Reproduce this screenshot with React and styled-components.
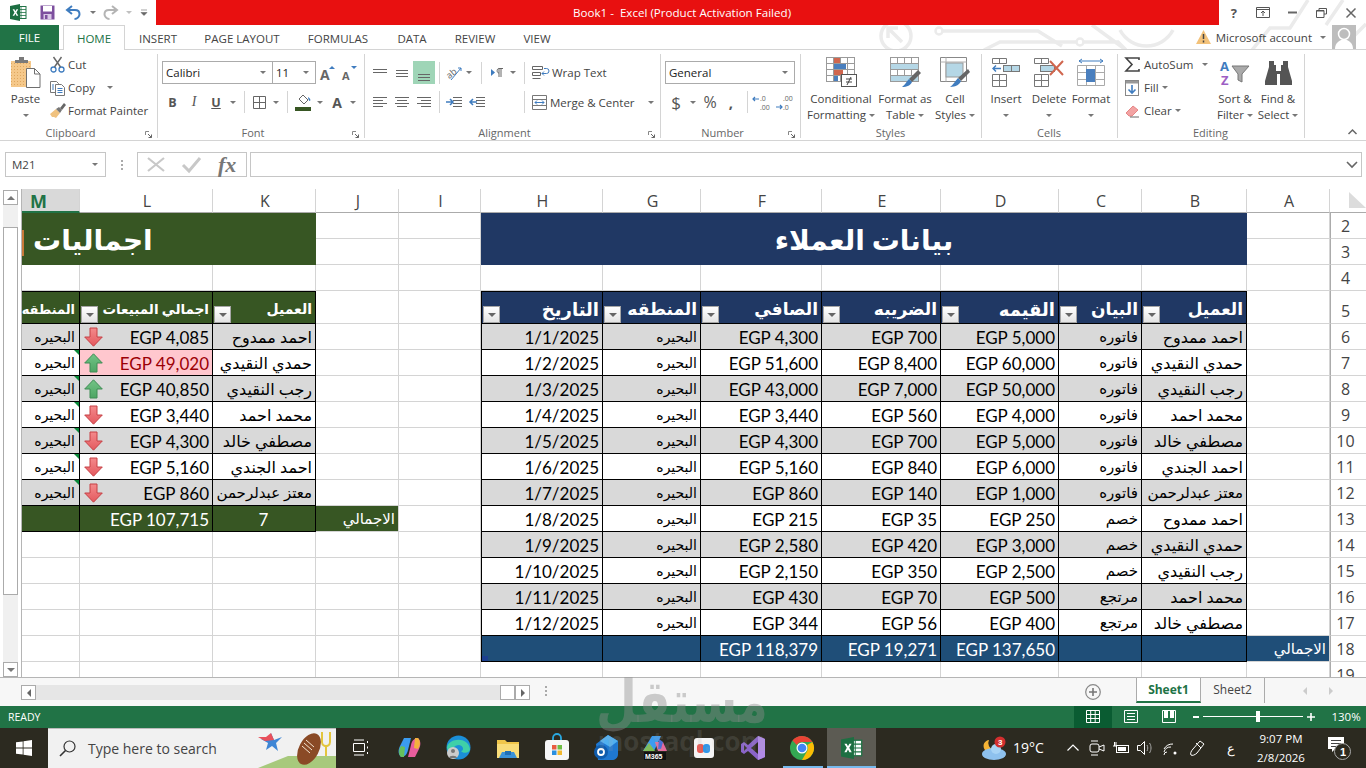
import React from "react";
import styled, { createGlobalStyle } from "styled-components";

const UI = `"Open Sans", "Noto Sans", sans-serif`;
const CELL = `Lato, "DejaVu Sans", sans-serif`;

const GlobalStyle = createGlobalStyle`
  html, body { margin: 0; padding: 0; background: #fff; }
  body { font-family: ${UI}; overflow: hidden; }
  * { box-sizing: border-box; }
  svg { display: block; overflow: visible; }
`;

const Page = styled.div`
  position: relative;
  width: 1366px;
  height: 768px;
  overflow: hidden;
  display: flex;
  flex-direction: column;
  background: #fff;
`;

/* ---------- title bar ---------- */
const Circuit = styled.svg`
  position: absolute;
  left: 860px;
  top: 0;
  overflow: hidden;
`;

const TitleBar = styled.div`
  position: relative;
  height: 25px;
  display: flex;
  align-items: center;
`;

const Quick = styled.div`
  width: 156px;
  height: 25px;
  display: flex;
  align-items: center;
`;

const QuickBtn = styled.div`
  width: ${(p) => p.$w}px;
  display: flex;
  justify-content: center;
  align-items: center;
`;

const TitleText = styled.div`
  width: 1064px;
  height: 24.5px;
  padding-right: 11px;
  background: #e81010;
  color: #fff;
  font-size: 11.6px;
  line-height: 25px;
  text-align: center;
  white-space: pre;
`;

const WinBtn = styled.div`
  width: 29.4px;
  display: flex;
  justify-content: center;
`;

/* ---------- tabs ---------- */
const TabRow = styled.div`
  position: relative;
  height: 25px;
  display: flex;
  border-bottom: 1px solid #d4d4d4;
`;

const FileTab = styled.div`
  width: 59px;
  height: 25px;
  background: #217346;
  color: #fff;
  font-size: 11.5px;
  line-height: 25px;
  text-align: center;
  margin-right: 4px;
`;

const Tab = styled.div`
  width: ${(p) => p.$w}px;
  height: 25px;
  font-size: 11.5px;
  line-height: 25px;
  text-align: center;
  color: ${(p) => (p.$on ? "#217346" : "#444")};
  background: ${(p) => (p.$on ? "#fff" : "transparent")};
  border: 1px solid ${(p) => (p.$on ? "#d4d4d4" : "transparent")};
  border-bottom: 0;
`;

const Account = styled.div`
  margin-left: auto;
  display: flex;
  align-items: center;
  height: 24px;
  font-size: 11.5px;
  color: #444;
  padding-right: 10px;
`;

const AccountName = styled.span`
  margin: 0 8px 0 5px;
`;

const Avatar = styled.div`
  width: 24px;
  height: 24px;
  margin-left: 6px;
  background: #bdbdbd;
  overflow: hidden;
`;

/* ---------- ribbon ---------- */
const Ribbon = styled.div`
  position: relative;
  height: 92px;
  padding-top: 4px;
  display: flex;
  border-bottom: 1px solid #d4d4d4;
`;

const Group = styled.div`
  position: relative;
  width: ${(p) => p.$w}px;
  height: 84px;
  display: flex;
  flex-direction: column;
  border-right: 1px solid #d4d4d4;
`;

const GroupBody = styled.div`
  flex: 1;
  display: flex;
  padding-left: ${(p) => p.$pad || 0}px;
`;

const GroupLabel = styled.div`
  height: 10px;
  line-height: 10px;
  font-size: 11px;
  text-align: center;
  color: #666;
  padding-right: ${(p) => (p.$launcher ? 16 : 1)}px;
`;

const Launcher = styled.svg`
  position: absolute;
  right: 5px;
  bottom: 0;
`;

const BigBtn = styled.div`
  width: ${(p) => p.$w}px;
  margin-left: ${(p) => p.$ml || 0}px;
  display: flex;
  flex-direction: column;
  align-items: center;
  font-size: 11.5px;
  line-height: 16px;
  color: #444;
  white-space: nowrap;
`;

const BigIcon = styled.div`
  height: 37px;
  display: flex;
  align-items: center;
  justify-content: center;
`;

const BigLine = styled.div`
  height: 16px;
  display: flex;
  align-items: center;
  gap: 3px;
`;

const SmallCol = styled.div`
  margin-left: ${(p) => p.$ml || 0}px;
  margin-top: -1px;
  width: ${(p) => p.$w}px;
  display: flex;
  flex-direction: column;
`;

const SmallRow = styled.div`
  height: 23px;
  display: flex;
  align-items: center;
  font-size: 11.5px;
  color: #444;
  white-space: nowrap;
`;

const SmallIcon = styled.div`
  width: ${(p) => p.$w || 18}px;
  flex: none;
  display: flex;
`;

const CaretGap = styled.span`
  width: ${(p) => p.$w}px;
  flex: none;
`;

const Stack = styled.div`
  flex: 1;
  padding-top: 7px;
  padding-left: ${(p) => p.$pad}px;
  display: flex;
  flex-direction: column;
  gap: 7px;
`;

const ToolRow = styled.div`
  height: ${(p) => p.$h || 22}px;
  display: flex;
  align-items: center;
`;

const Tool = styled.div`
  width: ${(p) => p.$w}px;
  height: 23px;
  margin-left: ${(p) => p.$ml || 0}px;
  flex: none;
  display: flex;
  align-items: center;
  justify-content: center;
  background: ${(p) => (p.$on ? "#9fd5b7" : "transparent")};
  color: #555;
  font-size: ${(p) => p.$size || 14}px;
  font-weight: ${(p) => (p.$bold ? 700 : 400)};
  font-style: ${(p) => (p.$italic ? "italic" : "normal")};
  font-family: ${(p) => (p.$serif ? `"Liberation Serif", serif` : UI)};
  text-decoration: ${(p) => (p.$under ? "underline" : "none")};
`;

const Sep = styled.div`
  width: 1px;
  height: 22px;
  flex: none;
  margin-left: ${(p) => p.$ml || 0}px;
  background: #d4d4d4;
`;

const Combo = styled.div`
  width: ${(p) => p.$w}px;
  height: 23px;
  margin-left: ${(p) => p.$ml || 0}px;
  flex: none;
  display: flex;
  align-items: center;
  justify-content: space-between;
  padding: 0 6px 0 3px;
  border: 1px solid #ababab;
  background: #fff;
  font-size: 11.5px;
  color: #222;
`;

const Caret = styled.span`
  display: block;
  flex: none;
  width: 0;
  height: 0;
  border-left: ${(p) => p.$s || 3}px solid transparent;
  border-right: ${(p) => p.$s || 3}px solid transparent;
  border-top: ${(p) => p.$s || 3}px solid ${(p) => p.$c || "#777"};
`;

const TextTool = styled.div`
  margin-left: ${(p) => p.$ml}px;
  display: flex;
  align-items: center;
  gap: 3px;
  font-size: 11.5px;
  color: #444;
  white-space: nowrap;
`;

const Collapse = styled.svg`
  position: absolute;
  right: 9px;
  bottom: 5px;
`;

/* ---------- formula bar ---------- */
const FormulaBar = styled.div`
  height: 48px;
  padding: 11px 4px 0 5px;
  display: flex;
  align-items: flex-start;
`;

const NameBox = styled.div`
  width: 101px;
  height: 25px;
  display: flex;
  align-items: center;
  justify-content: space-between;
  padding: 0 7px 0 6px;
  border: 1px solid #c6c6c6;
  font-size: 11.5px;
  color: #444;
`;

const Dots = styled.div`
  width: 31px;
  height: 25px;
  display: flex;
  align-items: center;
  justify-content: center;
`;

const FxBox = styled.div`
  width: 110px;
  height: 25px;
  display: flex;
  align-items: center;
  gap: 17px;
  padding-left: 9px;
  border: 1px solid #c6c6c6;
`;

const FxMark = styled.span`
  font-family: "Liberation Serif", serif;
  font-style: italic;
  font-weight: 700;
  font-size: 22px;
  color: #777;
`;

const FormulaInput = styled.div`
  flex: 1;
  height: 25px;
  margin-left: 3px;
  display: flex;
  align-items: center;
  justify-content: flex-end;
  padding-right: 3px;
  border: 1px solid #c6c6c6;
`;

/* ---------- sheet ---------- */
const SheetArea = styled.div`
  height: 489px;
  display: flex;
  border-bottom: 1px solid #b5b5b5;
`;

const VScroll = styled.div`
  width: 22px;
  padding: 1px 3px 0;
  display: flex;
  flex-direction: column;
  border-right: 1px solid #b5b5b5;
`;

const ScrollBtn = styled.div`
  height: 15px;
  flex: none;
  display: flex;
  align-items: center;
  justify-content: center;
  background: #fff;
  border: 1px solid #ababab;
`;

const VTrack = styled.div`
  flex: 1;
  margin: 0;
  padding: 22px 0 67px;
  display: flex;
  background: #f0f0f0;
`;

const VThumb = styled.div`
  flex: 1;
  background: #fff;
  border: 1px solid #ababab;
`;

const Grid = styled.div`
  direction: rtl;
  flex: 1;
  display: grid;
  grid-template-columns: 36px 83px 105px 83px 118px 119px 121px 98px 122px 82px 83px 103px 133px 58px;
  grid-template-rows: 24px 26px 26px 26px 33px repeat(13, 26px) 16px;
  overflow: hidden;
`;

const ColHead = styled.div`
  direction: ltr;
  font-size: ${(p) => (p.$sel ? 18 : 16)}px;
  line-height: 25px;
  text-align: center;
  padding: ${(p) => (p.$sel ? "0 24px 0 0" : "0 0 0 2px")};
  color: ${(p) => (p.$sel ? "#217346" : "#444")};
  font-weight: ${(p) => (p.$sel ? 700 : 400)};
  background: ${(p) => (p.$sel ? "#d9d9d9" : "#fff")};
  border-right: 1px solid #d4d4d4;
  border-bottom: ${(p) => (p.$sel ? "2px solid #217346" : "1px solid #ababab")};
`;

const Corner = styled.div`
  padding: 3px 0 0 3px;
  border-bottom: 1px solid #ababab;
`;

const RowHead = styled.div`
  direction: ltr;
  padding-right: 6px;
  overflow: hidden;
  font-size: 16px;
  text-align: center;
  color: #444;
  border-left: 1px solid #ababab;
  border-bottom: 1px solid #d4d4d4;
  line-height: ${(p) => (p.$tall ? 40 : 27)}px;
`;

const Cell = styled.div`
  position: relative;
  direction: ${(p) => (p.$ltr ? "ltr" : "rtl")};
  padding: 0 ${(p) => p.$inset || 3}px 0 2px;
  white-space: nowrap;
  overflow: hidden;
  text-align: ${(p) => p.$align || "right"};
  font-family: ${CELL};
  font-size: ${(p) => p.$size || 17}px;
  font-weight: ${(p) => (p.$bold ? 700 : 400)};
  line-height: ${(p) => (p.$head ? 34 : p.$ltr ? 27 : 25)}px;
  color: ${(p) => p.$color || "#000"};
  background: ${(p) => p.$bg || "#fff"};
  border-right: 1px solid ${(p) => (p.$line ? "#000" : "#d4d4d4")};
  border-bottom: 1px solid ${(p) => (p.$line ? "#000" : "#d4d4d4")};
  border-top: ${(p) => (p.$top ? "1px solid #000" : "0")};
  border-left: ${(p) => (p.$edge ? "1px solid #000" : "0")};
`;

const TitleCell = styled.div`
  grid-column: span ${(p) => p.$span};
  grid-row: span 2;
  position: relative;
  display: flex;
  align-items: center;
  justify-content: ${(p) => (p.$start ? "flex-start" : "center")};
  padding: 0 0 0 ${(p) => (p.$start ? 11 : 0)}px;
  direction: ltr;
  background: ${(p) => p.$bg};
  color: #fff;
  font-family: ${CELL};
  font-size: 28px;
  font-weight: 700;
`;

const FilterBtn = styled.div`
  position: absolute;
  left: 1px;
  bottom: 0;
  width: 17px;
  height: 17px;
  display: flex;
  align-items: center;
  justify-content: center;
  background: linear-gradient(#fff, #e4e4e4);
  border: 1px solid #a6a6a6;
`;

const TrendMark = styled.div`
  position: absolute;
  left: 4px;
  top: 3px;
`;

const ErrorMark = styled.div`
  position: absolute;
  top: 0;
  right: 0;
  width: 0;
  height: 0;
  border-top: 5px solid #0b8a3a;
  border-left: 5px solid transparent;
`;

const ResizeMark = styled.div`
  position: absolute;
  left: 0;
  bottom: 0;
  width: 6px;
  height: 5px;
  background: #1c3f8f;
`;

const ClipMark = styled.div`
  position: absolute;
  left: 0;
  top: 17px;
  width: 2px;
  height: 26px;
  background: #c87a3a;
`;

/* ---------- sheet tabs ---------- */
const SheetBar = styled.div`
  height: 28px;
  display: flex;
  align-items: flex-start;
  background: #f7f7f7;
`;

const HScroll = styled.div`
  margin: 7px 0 0 21px;
  width: 509px;
  height: 15px;
  display: flex;
  background: #e6e6e6;
`;

const HBtn = styled.div`
  width: 15px;
  height: 15px;
  flex: none;
  margin-left: ${(p) => (p.$auto ? "auto" : "0")};
  display: flex;
  align-items: center;
  justify-content: center;
  background: #fff;
  border: 1px solid #ababab;
`;

const SheetDots = styled.div`
  margin: 8px 0 0 15px;
`;

const AddSheet = styled.div`
  margin: 6px 0 0 538px;
`;

const SheetTab = styled.div`
  width: ${(p) => p.$w}px;
  height: 25px;
  margin-left: ${(p) => p.$ml || 0}px;
  font-size: 12px;
  line-height: 24px;
  text-align: center;
  font-weight: ${(p) => (p.$on ? 700 : 400)};
  color: ${(p) => (p.$on ? "#217346" : "#444")};
  background: ${(p) => (p.$on ? "#fff" : "transparent")};
  border-bottom: ${(p) => (p.$on ? "2px solid #217346" : "0")};
  border-left: ${(p) => (p.$on ? "1px solid #ababab" : "0")};
  border-right: 1px solid #ababab;
`;

const TabArrows = styled.div`
  margin: 9px 0 0 38px;
  display: flex;
  gap: 22px;
`;

/* ---------- status bar ---------- */
const StatusBar = styled.div`
  height: 22px;
  display: flex;
  align-items: center;
  padding-left: 8px;
  background: #217346;
  color: #fff;
  font-size: 10.5px;
`;

const ViewBtn = styled.div`
  width: 38px;
  height: 22px;
  margin-left: ${(p) => p.$ml || 0}px;
  display: flex;
  align-items: center;
  justify-content: center;
  background: ${(p) => (p.$on ? "#0a5c32" : "transparent")};
`;

const ZoomMinus = styled.div`
  margin-left: 5px;
`;

const ZoomTrack = styled.div`
  position: relative;
  width: 100px;
  height: 1px;
  margin: 0 4px;
  background: #fff;
`;

const ZoomThumb = styled.div`
  position: absolute;
  left: 53px;
  top: -5px;
  width: 4px;
  height: 11px;
  background: #fff;
`;

const ZoomText = styled.div`
  margin-left: 16px;
  font-size: 11.5px;
`;

/* ---------- taskbar ---------- */
const Taskbar = styled.div`
  height: 40px;
  display: flex;
  align-items: center;
  background: #2c2a20;
  color: #fff;
`;

const StartBtn = styled.div`
  width: 48px;
  display: flex;
  justify-content: center;
`;

const SearchBox = styled.div`
  width: 288px;
  height: 40px;
  display: flex;
  align-items: center;
  padding-left: 11px;
  background: #f1f1f1;
  border-top: 1px solid #bbb;
  color: #444;
  font-size: 14px;
  overflow: hidden;
`;

const SearchText = styled.span`
  margin-left: 12px;
  flex: 1;
`;

const TaskSlot = styled.div`
  position: relative;
  width: 49px;
  height: 40px;
  margin-left: ${(p) => (p.$active ? 1 : 0)}px;
  display: flex;
  align-items: center;
  justify-content: center;
  background: ${(p) => (p.$active ? "#5c5b53" : "transparent")};

  &::after {
    content: "";
    display: ${(p) => (p.$open ? "block" : "none")};
    position: absolute;
    left: ${(p) => (p.$active ? 0 : 6)}px;
    right: ${(p) => (p.$active ? 0 : 3)}px;
    bottom: 0;
    height: 2px;
    background: #76b9ed;
  }
`;

const Tray = styled.div`
  margin-left: auto;
  display: flex;
  align-items: center;
  height: 40px;
`;

const TrayItem = styled.div`
  width: ${(p) => p.$w}px;
  display: flex;
  justify-content: ${(p) => (p.$left ? "flex-start" : "center")};
  padding-left: ${(p) => (p.$left ? 7 : 0)}px;
  font-size: ${(p) => p.$size || 14}px;
  white-space: nowrap;
`;

const Clock = styled.div`
  width: 60px;
  font-size: 11.5px;
  line-height: 19px;
  text-align: center;
`;

const Watermark = styled.div`
  position: absolute;
  left: 587px;
  top: 666px;
  width: 190px;
  text-align: center;
  pointer-events: none;
  font-family: "DejaVu Sans", sans-serif;
  font-weight: 700;
`;

const MarkArabic = styled.div`
  height: 62px;
  font-size: 47px;
  line-height: 62px;
  color: rgba(140, 140, 140, 0.42);
  transform: scaleY(1.25);
  transform-origin: 50% 20%;
`;

const MarkLatin = styled.div`
  margin-top: -2px;
  font-size: 26px;
  line-height: 30px;
  font-family: "Open Sans", sans-serif;
  color: rgba(170, 170, 170, 0.16);
`;

/* ---------- icons ---------- */
const Ic = ({ w = 16, h = 16, children, vb }) => (
  <svg width={w} height={h} viewBox={vb || `0 0 ${w} ${h}`} fill="none">
    {children}
  </svg>
);

const ExcelLogo = ({ s = 17 }) => (
  <Ic w={s} h={s} vb="0 0 17 17">
    <rect x="6" y="2.5" width="10" height="12" fill="#fff" stroke="#217346" />
    <path d="M6 5.5h10M6 8.5h10M6 11.5h10M11 2.5v12" stroke="#217346" strokeWidth=".8" />
    <path d="M0 2l10-2v17L0 15z" fill="#1d6f42" />
    <path d="M2.6 5.2h1.8l1 2 1.1-2h1.7L6.4 8.4l1.9 3.3H6.5L5.4 9.6l-1.1 2.1H2.6l1.9-3.3z" fill="#fff" />
  </Ic>
);

const SaveIcon = () => (
  <Ic w={15} h={15}>
    <path d="M.5.5h14v14H.5z" fill="#7d4f9e" />
    <rect x="3" y="1" width="9" height="5.5" fill="#fff" />
    <rect x="3.5" y="9" width="8" height="5.5" fill="#d9c8e6" />
    <rect x="5" y="10" width="2.5" height="4" fill="#7d4f9e" />
  </Ic>
);

const UndoIcon = ({ c, flip }) => (
  <svg width="15" height="14" viewBox="0 0 15 14" fill="none" style={flip ? { transform: "scaleX(-1)" } : undefined}>
    <path d="M2 4h7c3 0 4.500 2 4.500 4.200S11.500 13 8.500 13" stroke={c} strokeWidth="2" />
    <path d="M6 0L1 4l5 4" stroke={c} strokeWidth="2" />
  </svg>
);

const PasteIcon = () => (
  <Ic w={30} h={31}>
    <rect x="0" y="4" width="20" height="26" fill="#f5c88a" />
    <path d="M0 4h20v26H0z" fill="url(#dotsPaste)" />
    <defs>
      <pattern id="dotsPaste" width="3" height="3" patternUnits="userSpaceOnUse">
        <rect width="1" height="1" fill="#dfa75f" />
      </pattern>
    </defs>
    <path d="M4 6V3h4V0h5v3h4v3z" fill="#7a7a7a" />
    <path d="M15.500 11.500h8l5.500 5.500v13.500H15.500z" fill="#fff" stroke="#6f6f6f" />
    <path d="M23.500 11.500V17H29" stroke="#6f6f6f" />
  </Ic>
);

const CutIcon = () => (
  <Ic w={15} h={16}>
    <circle cx="3.500" cy="12.500" r="2.500" stroke="#3f7cbf" strokeWidth="1.300" />
    <circle cx="11.500" cy="12.500" r="2.500" stroke="#3f7cbf" strokeWidth="1.300" />
    <path d="M10.500 10L3.500 0M4.500 10l7-10" stroke="#666" strokeWidth="1.400" />
  </Ic>
);

const CopyIcon = () => (
  <Ic w={15} h={16}>
    <path d="M.5 1.500h6l2 2v9h-8z" fill="#fff" stroke="#777" />
    <path d="M5.500 4.500h6l3 3v8h-9z" fill="#fff" stroke="#777" />
    <path d="M7.500 8.500h5M7.500 10.500h5M7.500 12.500h5M2 5h2M2 7h2M2 9h2" stroke="#3f7cbf" />
  </Ic>
);

const PainterIcon = () => (
  <Ic w={16} h={15}>
    <path d="M0 11l6-5 4 4-4 5-2-1-2 0z" fill="#f0c27f" />
    <path d="M6 6l3-2 3 3-2 3z" fill="#777" />
    <path d="M10 5l4-5 2 2-4 5z" fill="#666" />
  </Ic>
);

const GrowA = ({ down }) => (
  <Ic w={16} h={16}>
    <text x="1" y="15" fontFamily="Open Sans" fontWeight="700" fontSize={down ? 11 : 14} fill="#666">A</text>
    <path d={down ? "M10 1h6l-3 3z" : "M10 4l3-3 3 3z"} fill="#3f7cbf" />
  </Ic>
);

const BorderIcon = () => (
  <Ic w={13} h={13}>
    <path d="M.5.5h12v12H.5zM6.500.5v12M.5 6.500h12" stroke="#666" />
  </Ic>
);

const FillIcon = () => (
  <Ic w={17} h={17}>
    <path d="M4 5l4-4 5 5-4 4z" fill="#fff" stroke="#666" />
    <path d="M13 3c2 1 3 3 2 4-1 0-2-2-2-4z" fill="#3f7cbf" />
    <rect x="0" y="13" width="16" height="4" fill="#375623" />
  </Ic>
);

const Lines = ({ rows, c = "#666" }) => (
  <Ic w={16} h={16}>
    {rows.map(([a, y, b]) => (
      <path key={y} d={`M${a} ${y}.5H${b}`} stroke={c} />
    ))}
  </Ic>
);

const OrientIcon = () => (
  <Ic w={16} h={16}>
    <text x="0" y="11" fontFamily="Open Sans" fontSize="9" fill="#666" transform="rotate(-40 6 8)">ab</text>
    <path d="M5 15L15 3M12 3h3v3" stroke="#3f7cbf" />
  </Ic>
);

const RtlIcon = () => (
  <Ic w={13} h={12}>
    <path d="M0 2l4 3.500L0 9z" fill="#3f7cbf" />
    <path d="M8 10V1.500h4M10 10V1.500M8 1.500C5.500 1.500 5.500 6 8 6" stroke="#666" />
  </Ic>
);

const IndentIcon = ({ back }) => (
  <Ic w={16} h={13}>
    <path d="M7 1.500h9M7 4.500h9M7 7.500h9M7 10.500h9" stroke="#666" />
    {back ? (
      <path d="M8 6H1M4 3L1 6l3 3" stroke="#3f7cbf" strokeWidth="1.500" />
    ) : (
      <path d="M0 6h7M4 3l3 3-3 3" stroke="#3f7cbf" strokeWidth="1.500" />
    )}
  </Ic>
);

const WrapIcon = () => (
  <Ic w={17} h={14}>
    <path d="M.5.5h10v3H.5zM.5 6.500h8v3h-8zM.5 12.500h8" stroke="#666" />
    <path d="M12 2.500h2.500a2 2 0 010 5H10M12 5.500l-2 2 2 2" stroke="#3f7cbf" />
  </Ic>
);

const MergeIcon = () => (
  <Ic w={15} h={15}>
    <path d="M.5.5h14v14H.5zM.5 4.500h14M.5 10.500h14" stroke="#777" />
    <path d="M3 7.500h9M5 5.500l-2 2 2 2M10 5.500l2 2-2 2" stroke="#3f7cbf" />
  </Ic>
);

const DecimalIcon = ({ flip }) => (
  <Ic w={18} h={15}>
    <text x="7" y="5.500" fontFamily="Open Sans" fontSize="7" fill="#666">{flip ? ".00" : ".0"}</text>
    <text x="7" y="15" fontFamily="Open Sans" fontSize="7" fill="#666">{flip ? ".0" : ".00"}</text>
    <path d={flip ? "M0 12h6M4 10l2 2-2 2" : "M6 4H0M2 2L0 4l2 2"} stroke="#3f7cbf" strokeWidth="1.200" />
  </Ic>
);

const TableCells = ({ rows = 4, cols = 4 }) => {
  const cells = [];
  for (let r = 0; r < rows; r++) {
    for (let c = 0; c < cols; c++) {
      cells.push(<rect key={`${r}-${c}`} x={c * 7 + 0.5} y={r * 6 + 0.5} width="7" height="6" fill="#fff" stroke="#9a9a9a" />);
    }
  }
  return cells;
};

const CondIcon = () => (
  <Ic w={31} h={31}>
    <TableCells rows={4} cols={4} />
    <rect x="8" y="1" width="6" height="5" fill="#d0664e" />
    <rect x="8" y="7" width="12" height="5" fill="#4a7fbe" />
    <rect x="8" y="13" width="9" height="5" fill="#d0664e" />
    <rect x="8" y="19" width="4" height="5" fill="#4a7fbe" />
    <rect x="15.500" y="17.500" width="15" height="12" fill="#fff" stroke="#555" />
    <path d="M20 22h6M20 25h6M25 20l-4 8" stroke="#444" />
  </Ic>
);

const TableStyleIcon = () => (
  <Ic w={31} h={31}>
    <TableCells rows={4} cols={4} />
    <rect x="1" y="7" width="27" height="5" fill="#b5d7e6" />
    <rect x="1" y="19" width="27" height="5" fill="#b5d7e6" />
    <path d="M28 13l3 3-9 9-3-3z" fill="#666" />
    <path d="M19 22l3 3c-1 3-5 5-10 5 3-2 4-5 7-8z" fill="#3f7cbf" />
  </Ic>
);

const CellStyleIcon = () => (
  <Ic w={30} h={31}>
    <path d="M.5.5h26v24H.5z" fill="#fff" stroke="#888" />
    <path d="M.5 5h26M6 .5v24" stroke="#b0b0b0" />
    <rect x="6" y="6" width="17" height="14" fill="#b5d7e6" stroke="#9a9a9a" />
    <path d="M28 12l2 3-9 9-3-3z" fill="#666" />
    <path d="M18 21l3 3c-1 3-5 6-11 6 3-2 5-6 8-9z" fill="#3f7cbf" />
  </Ic>
);

const InsertCellIcon = () => (
  <Ic w={28} h={29}>
    <path d="M.5.5h14v5H.5zM7.500.5v5M.5 16.500h14v12H.5zM.5 22.500h14M7.500 16.500v12" stroke="#777" />
    <rect x="11.500" y="7.500" width="16" height="6" fill="#b5d7e6" stroke="#777" />
    <path d="M19.500 7.500v6" stroke="#777" />
    <path d="M9 10.500H1M4 7.500l-3 3 3 3" stroke="#3f7cbf" strokeWidth="1.400" />
  </Ic>
);

const DeleteCellIcon = () => (
  <Ic w={31} h={29}>
    <path d="M.5.5h14v5H.5zM7.500.5v5M.5 16.500h14v12H.5zM.5 22.500h14M7.500 16.500v12" stroke="#777" />
    <rect x="6.500" y="7.500" width="14" height="6" fill="#b5d7e6" stroke="#777" />
    <path d="M16 3l13 14M29 3L16 17" stroke="#d0664e" strokeWidth="2" />
  </Ic>
);

const FormatCellIcon = () => (
  <Ic w={28} h={30}>
    <path d="M2 3h24M5 1L2 3l3 2M23 1l3 2-3 2" stroke="#3f7cbf" />
    <path d="M.5 7.500h27v20H.5zM9.500 7.500v20M18.500 7.500v20M.5 14.500h27M.5 21.500h27" stroke="#aaa" />
    <rect x="9" y="11" width="9" height="13" fill="#4a7fbe" />
  </Ic>
);

const SigmaIcon = () => (
  <Ic w={15} h={15}>
    <path d="M14 3V1H1l6 6.500L1 14h13v-2" stroke="#444" strokeWidth="1.600" />
  </Ic>
);

const FillDownIcon = () => (
  <Ic w={14} h={16}>
    <rect x=".5" y=".5" width="13" height="15" fill="#fff" stroke="#888" />
    <rect x="1" y="1" width="12" height="2.500" fill="#999" />
    <path d="M7 5v8M3.500 9.500L7 13l3.500-3.500" stroke="#3f7cbf" strokeWidth="1.600" />
  </Ic>
);

const EraserIcon = () => (
  <Ic w={15} h={14}>
    <path d="M1 9l7-7 5 4-6 6H4z" fill="#f2a3a3" stroke="#e58585" />
    <path d="M5 13h9" stroke="#666" />
  </Ic>
);

const SortIcon = () => (
  <Ic w={30} h={27}>
    <text x="0" y="12" fontFamily="Open Sans" fontWeight="700" fontSize="13" fill="#3f7cbf">A</text>
    <text x="1" y="26" fontFamily="Open Sans" fontWeight="700" fontSize="13" fill="#9d5fc4">Z</text>
    <path d="M12 7h17l-7 8v8l-4-2v-6z" fill="#aaa" stroke="#777" />
  </Ic>
);

const FindIcon = () => (
  <Ic w={27} h={24}>
    <path d="M4 0h5v4h2v6h5V4h2V0h5v6l4 14v4H15V13h-3v11H0v-4L4 6z" fill="#555" />
  </Ic>
);

const ArrowTrend = ({ up }) => (
  <svg width="19" height="20" viewBox="0 0 19 20" style={up ? undefined : { transform: "scaleY(-1)" }}>
    <defs>
      <linearGradient id={up ? "trendUp" : "trendDown"} x1="0" y1="0" x2="0" y2="1">
        <stop offset="0" stopColor={up ? "#72c486" : "#e3595e"} />
        <stop offset="1" stopColor={up ? "#4ea564" : "#f48a8c"} />
      </linearGradient>
    </defs>
    <path d="M9.500.8L18.300 10H13v9H6v-9H.7z" fill={`url(#${up ? "trendUp" : "trendDown"})`} stroke={up ? "#3f8c55" : "#c64045"} />
  </svg>
);

const WinLogo = () => (
  <Ic w={16} h={16}>
    <path d="M0 2.300l6.700-.9v6.200H0zM7.500 1.300L16 0v7.600H7.500zM0 8.400h6.700v6.200L0 13.700zM7.500 8.400H16V16l-8.500-1.200z" fill="#fff" />
  </Ic>
);

const Magnifier = () => (
  <Ic w={17} h={17}>
    <circle cx="10.500" cy="6.500" r="5.500" stroke="#333" strokeWidth="1.200" />
    <path d="M6.500 10.500L1 16" stroke="#333" strokeWidth="1.600" />
  </Ic>
);

const SearchArt = () => (
  <Ic w={78} h={40}>
    <path d="M0 40l30-12h48v12z" fill="#a7c97c" />
    <path d="M13 5l3 7 8-3-6 6 2 8-6-5-6 4 2-7-7-4 8 0z" fill="#3e86d6" />
    <path d="M13 5l3 7-9 1-7-4 8 0z" fill="#e8505b" />
    <ellipse cx="51" cy="21" rx="10" ry="17" transform="rotate(28 51 21)" fill="#8a4a26" />
    <path d="M48 12l8 7M46 15l8 7M44 18l8 7" stroke="#f5e6d3" />
    <path d="M64 4v10c0 4 4 4 4 4s4 0 4-4V4M68 18v10" stroke="#e3c53d" strokeWidth="2" />
  </Ic>
);

const TaskViewIcon = () => (
  <Ic w={16} h={16}>
    <path d="M1 0h10M1 15h10M.5 3.500h11v8H.5zM14.500 1v2M14.500 6.500v2M14.500 12v2" stroke="#fff" />
  </Ic>
);

const CopilotIcon = () => (
  <Ic w={23} h={21}>
    <path d="M6 1h7l-3 12c-1 5-4 7-7 7-3-3-3-7-1-11z" fill="#3b9cf0" />
    <path d="M3 20c-3-3-2-8 0-11l4 1-1 10z" fill="#66c05c" />
    <path d="M17 20h-7l3-12c1-5 4-7 7-7 3 3 3 7 1 11z" fill="#e85d9d" />
    <path d="M20 1c3 3 2 8 0 11l-4-1 1-10z" fill="#f3b23d" />
  </Ic>
);

const EdgeIcon = () => (
  <Ic w={25} h={25}>
    <circle cx="12.500" cy="12.500" r="12" fill="#1b8fd8" />
    <path d="M1 12C3 3 22 1 24 14c0 4-7 5-9 2 3 0 3-5-2-6-5 0-7 4-6 9-3-1-6-3-6-7z" fill="#3fd0a8" />
    <circle cx="7" cy="18" r="6" fill="#ccc" />
    <circle cx="7" cy="16" r="2" fill="#777" />
    <path d="M3 23c0-3 8-3 8 0z" fill="#777" />
  </Ic>
);

const FolderIcon = () => (
  <Ic w={22} h={20}>
    <path d="M0 2h8l2 2h12v16H0z" fill="#f0c64a" />
    <path d="M0 6h22v14H0z" fill="#f9dd79" />
    <path d="M5 14h12l3 6H2z" fill="#3a92d8" />
    <rect x="8" y="13" width="6" height="4" fill="#1f6fb5" />
  </Ic>
);

const StoreIcon = () => (
  <Ic w={24} h={25}>
    <path d="M8 5V3a4 4 0 018 0v2" stroke="#2aa8e0" strokeWidth="1.800" />
    <rect x="0" y="5" width="24" height="20" rx="3" fill="#f7f7f7" />
    <rect x="7" y="10" width="4.500" height="4.500" fill="#e85c41" />
    <rect x="12.500" y="10" width="4.500" height="4.500" fill="#6ebd44" />
    <rect x="7" y="15.500" width="4.500" height="4.500" fill="#2a8fe0" />
    <rect x="12.500" y="15.500" width="4.500" height="4.500" fill="#f3b92f" />
  </Ic>
);

const OutlookIcon = () => (
  <Ic w={24} h={25}>
    <path d="M2 9l12-9 10 6v13c0 4-3 6-6 6H4z" fill="#1f78d1" />
    <path d="M14 0l10 6-8 6L6 6z" fill="#50b0f0" />
    <circle cx="7" cy="17" r="7" fill="#0f5cad" />
    <circle cx="7" cy="17" r="3" stroke="#fff" strokeWidth="1.800" />
  </Ic>
);

const M365Icon = () => (
  <Ic w={24} h={24}>
    <path d="M0 15L9 0h9l-7 15z" fill="#3b9cf0" />
    <path d="M0 15l6-8 6 8z" fill="#7ac051" />
    <path d="M12 6h8l4 9H15z" fill="#e8699d" />
    <path d="M16 3l4 3-2 7h-3z" fill="#4e6fd6" />
    <rect x="1" y="16" width="22" height="8" fill="#111" />
    <text x="2" y="23" fontFamily="Liberation Sans" fontWeight="700" fontSize="7" fill="#fff">M365</text>
  </Ic>
);

const PairIcon = () => (
  <Ic w={20} h={20}>
    <rect width="20" height="20" rx="3" fill="#f4f4f4" />
    <rect x="3" y="6" width="7" height="9" rx="3" fill="#e9574f" />
    <rect x="9" y="6" width="7" height="9" rx="3" fill="#2f95e8" />
  </Ic>
);

const StudioIcon = () => (
  <Ic w={24} h={24}>
    <path d="M17 0l7 3v18l-7 3-10-9-4 3-3-2V8l3-2 4 3z" fill="#8a63c9" />
    <path d="M17 6v12l-7-6z" fill="#2c2a20" />
    <path d="M3 9v6l3-3z" fill="#2c2a20" />
    <path d="M17 0l7 3v18l-7 3z" fill="#b18ae6" />
  </Ic>
);

const ChromeIcon = () => (
  <Ic w={24} h={24}>
    <circle cx="12" cy="12" r="12" fill="#34a853" />
    <path d="M12 0a12 12 0 0110.400 6H12a6 6 0 00-5.200 3L2.500 4.500A12 12 0 0112 0z" fill="#ea4335" />
    <path d="M22.400 6A12 12 0 0112 24l5.200-9a6 6 0 000-6z" fill="#fbbc04" />
    <circle cx="12" cy="12" r="5.500" fill="#fff" />
    <circle cx="12" cy="12" r="4.300" fill="#4285f4" />
  </Ic>
);

const WeatherIcon = () => (
  <Ic w={25} h={24}>
    <path d="M8 4a6 6 0 105 10A7 7 0 018 4z" fill="#f5b335" />
    <ellipse cx="13" cy="18" rx="12" ry="6" fill="#8ec1ee" />
    <circle cx="15" cy="13" r="5" fill="#a8d3f5" />
    <circle cx="19" cy="6" r="5.500" fill="#d32f2f" />
    <text x="17" y="9" fontFamily="Liberation Sans" fontWeight="700" fontSize="8" fill="#fff">3</text>
  </Ic>
);

const NoteIcon = () => (
  <Ic w={24} h={24}>
    <path d="M1 1h16v12H8l-3 3v-3H1z" fill="#fff" />
    <path d="M4 4.500h10M4 7.500h10M4 10.500h8" stroke="#444" />
    <circle cx="15.500" cy="15.500" r="8" fill="#2c2a20" stroke="#aaa" />
    <text x="13" y="20" fontFamily="Liberation Sans" fontWeight="700" fontSize="11" fill="#fff">1</text>
  </Ic>
);

const S = { stroke: "#fff", strokeWidth: 1 };

/* ---------- data ---------- */
const NAMES = ["احمد ممدوح", "حمدي النقيدي", "رجب النقيدي", "محمد احمد", "مصطفي خالد", "احمد الجندي", "معتز عبدلرحمن", "احمد ممدوح", "حمدي النقيدي", "رجب النقيدي", "محمد احمد", "مصطفي خالد"];
const KINDS = ["فاتوره", "فاتوره", "فاتوره", "فاتوره", "فاتوره", "فاتوره", "فاتوره", "خصم", "خصم", "خصم", "مرتجع", "مرتجع"];
const VALUES = ["5,000", "60,000", "50,000", "4,000", "5,000", "6,000", "1,000", "250", "3,000", "2,500", "500", "400"];
const TAXES = ["700", "8,400", "7,000", "560", "700", "840", "140", "35", "420", "350", "70", "56"];
const NETS = ["4,300", "51,600", "43,000", "3,440", "4,300", "5,160", "860", "215", "2,580", "2,150", "430", "344"];
const SALES = [["4,085", false], ["49,020", true], ["40,850", true], ["3,440", false], ["4,300", false], ["5,160", false], ["860", false]];
const LETTERS = ["A", "B", "C", "D", "E", "F", "G", "H", "I", "J", "K", "L", "M"];
const HEAD_1 = [["العميل", 17], ["البيان", 17], ["القيمه", 18], ["الضريبه", 17], ["الصافي", 17], ["المنطقه", 17], ["التاريخ", 18]];

const BLUE = "#203864";
const TOTAL = "#1f4e78";
const GREEN = "#375623";
const GREY = "#d9d9d9";

// the longest name only fits its column one size down
const nameSize = (i) => (i === 6 ? 15 : 16);

const Filter = () => (
  <FilterBtn>
    <Caret $s={4} $c="#666" />
  </FilterBtn>
);

const renderRow = (r) => {
  const out = [<RowHead key="rh" $tall={r === 5}>{r}</RowHead>];
  const blank = (k) => <Cell key={k} />;
  const i = r - 6;

  // right-hand table, columns A..H
  out.push(
    r === 18 ? (
      <Cell key="A" $bg={TOTAL} $color="#fff" $size={15}>الاجمالي</Cell>
    ) : (
      blank("A")
    )
  );
  if (r === 2) {
    out.push(<TitleCell key="t1" $span={7} $bg={BLUE}>بيانات العملاء</TitleCell>);
  } else if (r === 5) {
    HEAD_1.forEach(([h, size], n) =>
      out.push(
        <Cell key={h} $head $line $top $edge={n === 6} $bg={BLUE} $color="#fff" $bold $size={size}>
          {h}
          <Filter />
        </Cell>
      )
    );
  } else if (r >= 6 && r <= 17) {
    const bg = r % 2 === 0 ? GREY : "#fff";
    const money = (v, k) => <Cell key={k} $ltr $line $bg={bg}>{`EGP ${v}`}</Cell>;
    out.push(<Cell key="B" $line $bg={bg} $size={nameSize(i)}>{NAMES[i]}</Cell>);
    out.push(<Cell key="C" $line $bg={bg} $size={15}>{KINDS[i]}</Cell>);
    out.push(money(VALUES[i], "D"), money(TAXES[i], "E"), money(NETS[i], "F"));
    out.push(<Cell key="G" $line $bg={bg} $size={14}>البحيره</Cell>);
    out.push(<Cell key="H" $ltr $line $edge $bg={bg}>{`1/${r - 5}/2025`}</Cell>);
  } else if (r === 18) {
    const total = (v, k) => (
      <Cell key={k} $ltr={!!v} $line $bg={TOTAL} $color="#fff">
        {v ? `EGP ${v}` : ""}
      </Cell>
    );
    out.push(total("", "B"), total("", "C"), total("137,650", "D"), total("19,271", "E"), total("118,379", "F"), total("", "G"));
    out.push(
      <Cell key="H" $line $edge $bg={TOTAL}>
        <ResizeMark />
      </Cell>
    );
  } else if (r !== 3) {
    ["B", "C", "D", "E", "F", "G", "H"].forEach((k) => out.push(blank(k)));
  }

  out.push(blank("I"));

  // left-hand table, columns J..M
  if (r === 13) {
    out.push(<Cell key="J" $bg={GREEN} $color="#fff" $size={15}>الاجمالي</Cell>);
  } else {
    out.push(blank("J"));
  }
  if (r === 2) {
    out.push(
      <TitleCell key="t2" $span={3} $bg={GREEN} $start>
        <ClipMark />
        اجماليات
      </TitleCell>
    );
  } else if (r === 5) {
    out.push(
      <Cell key="K" $head $line $top $bg={GREEN} $color="#fff" $bold $size={14}>العميل<Filter /></Cell>,
      <Cell key="L" $head $line $top $bg={GREEN} $color="#fff" $bold $size={13.5}>اجمالي المبيعات<Filter /></Cell>,
      <Cell key="M" $head $line $top $inset={4} $bg={GREEN} $color="#fff" $bold $size={13}>المنطقه</Cell>
    );
  } else if (r >= 6 && r <= 12) {
    const bg = r % 2 === 0 ? GREY : "#fff";
    const [val, up] = SALES[i];
    const hot = r === 7;
    out.push(
      <Cell key="K" $line $bg={bg} $size={nameSize(i)}>{NAMES[i]}</Cell>,
      <Cell key="L" $ltr $line $bg={hot ? "#ffc7ce" : bg} $color={hot ? "#9c0006" : "#000"}>
        <TrendMark><ArrowTrend up={up} /></TrendMark>
        {`EGP ${val}`}
      </Cell>,
      <Cell key="M" $line $inset={4} $bg={bg} $size={14}>
        البحيره
        {r > 6 && <ErrorMark />}
      </Cell>
    );
  } else if (r === 13) {
    out.push(
      <Cell key="K" $ltr $line $bg={GREEN} $color="#fff" $align="center">7</Cell>,
      <Cell key="L" $ltr $line $bg={GREEN} $color="#fff">EGP 107,715</Cell>,
      <Cell key="M" $line $bg={GREEN} />
    );
  } else if (r !== 3) {
    ["K", "L", "M"].forEach((k) => out.push(blank(k)));
  }
  return out;
};

const Launch = () => (
  <Launcher width="7" height="7" viewBox="0 0 7 7" fill="none">
    <path d="M.5 4V.5H4" stroke="#888" />
    <path d="M3 3l3.500 3.500M6.500 3.500v3h-3" stroke="#666" />
  </Launcher>
);

export default function App() {
  const rows = [];
  for (let r = 2; r <= 19; r++) rows.push(<React.Fragment key={r}>{renderRow(r)}</React.Fragment>);

  return (
    <Page>
      <GlobalStyle />
      <Circuit width="506" height="50" viewBox="0 0 506 50" fill="none" stroke="#ebebeb" strokeWidth="3.500">
        <circle cx="36" cy="36" r="15" />
        <path d="M42 42L28 28M28 38V28h10" />
        <circle cx="79" cy="31" r="3.500" strokeWidth="2.500" />
        <path d="M83 31h95l24 15" />
        <circle cx="220" cy="42" r="3.500" strokeWidth="2.500" />
        <path d="M216 42h-76l-16 8M224 42h34l8 8M232 25l34 25" />
        <path d="M260 30a30 30 0 0053 0" />
        <path d="M392 50l18-22h20l18-28M466 25l17-25M480 50l26-26" />
      </Circuit>

      <TitleBar>
        <Quick>
          <QuickBtn $w={36}><ExcelLogo /></QuickBtn>
          <QuickBtn $w={22}><SaveIcon /></QuickBtn>
          <QuickBtn $w={30}><UndoIcon c="#3f7cbf" /></QuickBtn>
          <QuickBtn $w={10}><Caret /></QuickBtn>
          <QuickBtn $w={24}><UndoIcon c="#b4b4b4" flip /></QuickBtn>
          <QuickBtn $w={14}><Caret $c="#c0c0c0" /></QuickBtn>
          <QuickBtn $w={16}>
            <Ic w={6} h={7}><path d="M0 1h6M0 3.500h6l-3 3z" fill="#666" stroke="#666" strokeWidth=".6" /></Ic>
          </QuickBtn>
        </Quick>
        <TitleText>{"Book1 -  Excel (Product Activation Failed)"}</TitleText>
        <WinBtn><Tool $w={16} $bold $size={13}>?</Tool></WinBtn>
        <WinBtn>
          <Ic w={14} h={11}><path d="M.5.5h13v10H.5zM.5 2.500h13M7 9V4M5 6l2-2 2 2" stroke="#555" /></Ic>
        </WinBtn>
        <WinBtn><Ic w={9} h={3}><path d="M0 1.500h9" stroke="#666" strokeWidth="2" /></Ic></WinBtn>
        <WinBtn>
          <Ic w={11} h={10}><path d="M3 2V.5h7.500V6H8M.5 2.500h7.500v7H.5z" stroke="#555" /><path d="M.5 3h7.500" stroke="#555" /></Ic>
        </WinBtn>
        <WinBtn>
          <Ic w={10} h={10}><path d="M.5.5l9 9M9.500.5l-9 9" stroke="#666" strokeWidth="1.500" /></Ic>
        </WinBtn>
      </TitleBar>

      <TabRow>
        <FileTab>FILE</FileTab>
        <Tab $w={62} $on>HOME</Tab>
        <Tab $w={66}>INSERT</Tab>
        <Tab $w={102}>PAGE LAYOUT</Tab>
        <Tab $w={90}>FORMULAS</Tab>
        <Tab $w={58}>DATA</Tab>
        <Tab $w={68}>REVIEW</Tab>
        <Tab $w={56}>VIEW</Tab>
        <Account>
          <Ic w={15} h={14}><path d="M7.500 0L15 14H0z" fill="#f3c27a" /><path d="M7.500 4v5M7.500 10.500v2" stroke="#444" strokeWidth="1.500" /></Ic>
          <AccountName>Microsoft account</AccountName>
          <Caret />
          <Avatar>
            <Ic w={24} h={24}><circle cx="12" cy="9" r="5.500" stroke="#fff" strokeWidth="1.500" fill="#bdbdbd" /><path d="M3 24c0-6 4-8 6-9h6c2 1 6 3 6 9z" fill="#fff" /></Ic>
          </Avatar>
        </Account>
      </TabRow>

      <Ribbon>
        <Group $w={158}>
          <GroupBody $pad={5}>
            <BigBtn $w={41}>
              <BigIcon><PasteIcon /></BigIcon>
              <BigLine>Paste</BigLine>
              <BigLine><Caret /></BigLine>
            </BigBtn>
            <SmallCol $ml={4} $w={105}>
              <SmallRow><SmallIcon><CutIcon /></SmallIcon>Cut</SmallRow>
              <SmallRow><SmallIcon><CopyIcon /></SmallIcon>Copy<CaretGap $w={12} /><Caret /></SmallRow>
              <SmallRow><SmallIcon><PainterIcon /></SmallIcon>Format Painter</SmallRow>
            </SmallCol>
          </GroupBody>
          <GroupLabel $launcher>Clipboard</GroupLabel>
          <Launch />
        </Group>

        <Group $w={207}>
          <Stack $pad={4}>
            <ToolRow $h={23}>
              <Combo $w={111}>Calibri<Caret /></Combo>
              <Combo $w={44} $ml={-1}>11<Caret /></Combo>
              <Tool $w={22}><GrowA /></Tool>
              <Tool $w={22}><GrowA down /></Tool>
            </ToolRow>
            <ToolRow>
              <Tool $w={21} $bold $size={12.500}>B</Tool>
              <Tool $w={22} $italic $serif $size={14}>I</Tool>
              <Tool $w={22} $bold $under $size={12.500}>U</Tool>
              <Tool $w={12}><Caret /></Tool>
              <Sep $ml={5} />
              <Tool $w={22} $ml={3}><BorderIcon /></Tool>
              <Tool $w={12}><Caret /></Tool>
              <Sep $ml={5} />
              <Tool $w={22} $ml={4}><FillIcon /></Tool>
              <Tool $w={11}><Caret /></Tool>
              <Tool $w={22} $ml={1} $bold $size={14}>A</Tool>
              <Tool $w={10}><Caret /></Tool>
            </ToolRow>
          </Stack>
          <GroupLabel $launcher>Font</GroupLabel>
          <Launch />
        </Group>

        <Group $w={296}>
          <Stack $pad={4}>
            <ToolRow $h={23}>
              <Tool $w={22}><Lines rows={[[1, 4, 15], [1, 7, 15]]} /></Tool>
              <Tool $w={22}><Lines rows={[[2, 5, 14], [2, 8, 14], [2, 11, 14]]} /></Tool>
              <Tool $w={22} $on><Lines rows={[[2, 9, 14], [2, 12, 14], [2, 15, 14]]} /></Tool>
              <Sep $ml={4} />
              <Tool $w={20} $ml={4}><OrientIcon /></Tool>
              <Tool $w={10}><Caret /></Tool>
              <Sep $ml={7} />
              <Tool $w={20} $ml={5}><RtlIcon /></Tool>
              <Tool $w={12}><Caret /></Tool>
              <Sep $ml={5} />
              <TextTool $ml={7}><WrapIcon />Wrap Text</TextTool>
            </ToolRow>
            <ToolRow>
              <Tool $w={22}><Lines rows={[[1, 3, 15], [1, 6, 11], [1, 9, 15], [1, 12, 11]]} /></Tool>
              <Tool $w={22}><Lines rows={[[1, 3, 15], [3, 6, 13], [1, 9, 15], [3, 12, 13]]} /></Tool>
              <Tool $w={22}><Lines rows={[[1, 3, 15], [5, 6, 15], [1, 9, 15], [5, 12, 15]]} /></Tool>
              <Sep $ml={4} />
              <Tool $w={20} $ml={4}><IndentIcon /></Tool>
              <Tool $w={20} $ml={3}><IndentIcon back /></Tool>
              <Sep $ml={37} />
              <TextTool $ml={7}><MergeIcon />Merge &amp; Center<CaretGap $w={7} /><Caret /></TextTool>
            </ToolRow>
          </Stack>
          <GroupLabel $launcher>Alignment</GroupLabel>
          <Launch />
        </Group>

        <Group $w={140}>
          <Stack $pad={4}>
            <ToolRow $h={23}><Combo $w={130}>General<Caret /></Combo></ToolRow>
            <ToolRow>
              <Tool $w={22} $size={17}>$</Tool>
              <Tool $w={11}><Caret /></Tool>
              <Tool $w={22} $ml={1} $size={16}>%</Tool>
              <Tool $w={20} $bold $size={15}>,</Tool>
              <Sep $ml={6} />
              <Tool $w={20} $ml={4}><DecimalIcon /></Tool>
              <Tool $w={20} $ml={3}><DecimalIcon flip /></Tool>
            </ToolRow>
          </Stack>
          <GroupLabel $launcher>Number</GroupLabel>
          <Launch />
        </Group>

        <Group $w={181}>
          <GroupBody $pad={9}>
            <BigBtn $w={62}>
              <BigIcon><CondIcon /></BigIcon>
              <BigLine>Conditional</BigLine>
              <BigLine>Formatting<Caret /></BigLine>
            </BigBtn>
            <BigBtn $w={66}>
              <BigIcon><TableStyleIcon /></BigIcon>
              <BigLine>Format as</BigLine>
              <BigLine>Table<Caret /></BigLine>
            </BigBtn>
            <BigBtn $w={34}>
              <BigIcon><CellStyleIcon /></BigIcon>
              <BigLine>Cell</BigLine>
              <BigLine>Styles<Caret /></BigLine>
            </BigBtn>
          </GroupBody>
          <GroupLabel>Styles</GroupLabel>
        </Group>

        <Group $w={136}>
          <GroupBody $pad={4}>
            <BigBtn $w={40}>
              <BigIcon><InsertCellIcon /></BigIcon>
              <BigLine>Insert</BigLine>
              <BigLine><Caret /></BigLine>
            </BigBtn>
            <BigBtn $w={42} $ml={2}>
              <BigIcon><DeleteCellIcon /></BigIcon>
              <BigLine>Delete</BigLine>
              <BigLine><Caret /></BigLine>
            </BigBtn>
            <BigBtn $w={42}>
              <BigIcon><FormatCellIcon /></BigIcon>
              <BigLine>Format</BigLine>
              <BigLine><Caret /></BigLine>
            </BigBtn>
          </GroupBody>
          <GroupLabel>Cells</GroupLabel>
        </Group>

        <Group $w={187}>
          <GroupBody $pad={7}>
            <SmallCol $w={90}>
              <SmallRow><SmallIcon $w={19}><SigmaIcon /></SmallIcon>AutoSum<CaretGap $w={9} /><Caret /></SmallRow>
              <SmallRow><SmallIcon $w={19}><FillDownIcon /></SmallIcon>Fill<CaretGap $w={3} /><Caret /></SmallRow>
              <SmallRow><SmallIcon $w={19}><EraserIcon /></SmallIcon>Clear<CaretGap $w={3} /><Caret /></SmallRow>
            </SmallCol>
            <BigBtn $w={40}>
              <BigIcon><SortIcon /></BigIcon>
              <BigLine>Sort &amp;</BigLine>
              <BigLine>Filter<Caret /></BigLine>
            </BigBtn>
            <BigBtn $w={40} $ml={3}>
              <BigIcon><FindIcon /></BigIcon>
              <BigLine>Find &amp;</BigLine>
              <BigLine>Select<Caret /></BigLine>
            </BigBtn>
          </GroupBody>
          <GroupLabel>Editing</GroupLabel>
        </Group>

        <Collapse width="9" height="6" viewBox="0 0 9 6" fill="none">
          <path d="M.5 5L4.500 1l4 4" stroke="#666" strokeWidth="1.500" />
        </Collapse>
      </Ribbon>

      <FormulaBar>
        <NameBox>M21<Caret $c="#777" /></NameBox>
        <Dots>
          <Ic w={2} h={10}><path d="M1 0v2M1 4v2M1 8v2" stroke="#aaa" strokeWidth="2" /></Ic>
        </Dots>
        <FxBox>
          <Ic w={18} h={15}><path d="M1 1l16 13M17 1L1 14" stroke="#c8c8c8" strokeWidth="2.200" /></Ic>
          <Ic w={19} h={15}><path d="M1 8l6 6L18 1" stroke="#c8c8c8" strokeWidth="3" /></Ic>
          <FxMark>fx</FxMark>
        </FxBox>
        <FormulaInput>
          <Ic w={12} h={8}><path d="M1 1l5 5 5-5" stroke="#666" strokeWidth="1.600" /></Ic>
        </FormulaInput>
      </FormulaBar>

      <SheetArea>
        <VScroll>
          <ScrollBtn><Ic w={8} h={4}><path d="M0 4l4-4 4 4z" fill="#777" /></Ic></ScrollBtn>
          <VTrack><VThumb /></VTrack>
          <ScrollBtn><Ic w={8} h={4}><path d="M0 0l4 4 4-4z" fill="#777" /></Ic></ScrollBtn>
        </VScroll>
        <Grid>
          <Corner>
            <Ic w={17} h={16}><path d="M0 0l17 16H0z" fill="#dcdcdc" /></Ic>
          </Corner>
          {LETTERS.map((l) => (
            <ColHead key={l} $sel={l === "M"}>{l}</ColHead>
          ))}
          {rows}
        </Grid>
      </SheetArea>

      <SheetBar>
        <HScroll>
          <HBtn><Ic w={4} h={8}><path d="M4 0L0 4l4 4z" fill="#666" /></Ic></HBtn>
          <HBtn $auto />
          <HBtn><Ic w={4} h={8}><path d="M0 0l4 4-4 4z" fill="#666" /></Ic></HBtn>
        </HScroll>
        <SheetDots>
          <Ic w={2} h={10}><path d="M1 0v2M1 4v2M1 8v2" stroke="#aaa" strokeWidth="2" /></Ic>
        </SheetDots>
        <AddSheet>
          <Ic w={16} h={16}>
            <circle cx="8" cy="8" r="7.300" stroke="#888" strokeWidth="1.200" />
            <path d="M4 8h8M8 4v8" stroke="#777" strokeWidth="1.600" />
          </Ic>
        </AddSheet>
        <SheetTab $w={65} $ml={35} $on>Sheet1</SheetTab>
        <SheetTab $w={64}>Sheet2</SheetTab>
        <TabArrows>
          <Ic w={4} h={8}><path d="M4 0L0 4l4 4z" fill="#ccc" /></Ic>
          <Ic w={4} h={8}><path d="M0 0l4 4-4 4z" fill="#ccc" /></Ic>
        </TabArrows>
      </SheetBar>

      <StatusBar>
        READY
        <ViewBtn $on $ml={1034}>
          <Ic w={14} h={13}><path d="M.5.5h13v12H.5zM4.700.5v12M9.200.5v12M.5 4.500h13M.5 8.500h13" {...S} /></Ic>
        </ViewBtn>
        <ViewBtn>
          <Ic w={14} h={13}><path d="M.5.5h13v12H.5z" {...S} /><path d="M3 3.500h8M3 6.500h8M3 9.500h8" {...S} /></Ic>
        </ViewBtn>
        <ViewBtn>
          <Ic w={14} h={13}><path d="M.5.500h13v12H.5z" {...S} /><rect x="2" y="1" width="4" height="7" fill="#fff" /><rect x="8" y="1" width="4" height="7" fill="#fff" /></Ic>
        </ViewBtn>
        <ZoomMinus><Ic w={6} h={2}><path d="M0 1h6" stroke="#fff" strokeWidth="2" /></Ic></ZoomMinus>
        <ZoomTrack><ZoomThumb /></ZoomTrack>
        <Ic w={8} h={8}><path d="M0 4h8M4 0v8" stroke="#fff" strokeWidth="1.600" /></Ic>
        <ZoomText>130%</ZoomText>
      </StatusBar>

      <Taskbar>
        <StartBtn><WinLogo /></StartBtn>
        <SearchBox>
          <Magnifier />
          <SearchText>Type here to search</SearchText>
          <SearchArt />
        </SearchBox>
        <TaskSlot><TaskViewIcon /></TaskSlot>
        <TaskSlot><CopilotIcon /></TaskSlot>
        <TaskSlot><EdgeIcon /></TaskSlot>
        <TaskSlot><FolderIcon /></TaskSlot>
        <TaskSlot><StoreIcon /></TaskSlot>
        <TaskSlot><OutlookIcon /></TaskSlot>
        <TaskSlot><M365Icon /></TaskSlot>
        <TaskSlot><PairIcon /></TaskSlot>
        <TaskSlot><StudioIcon /></TaskSlot>
        <TaskSlot $open><ChromeIcon /></TaskSlot>
        <TaskSlot $active $open><ExcelLogo s={22} /></TaskSlot>
        <Tray>
          <TrayItem $w={26}><WeatherIcon /></TrayItem>
          <TrayItem $w={55} $left>19°C</TrayItem>
          <TrayItem $w={24}>
            <Ic w={12} h={7}><path d="M.5 6.500L6 1l5.500 5.500" stroke="#fff" strokeWidth="1.200" /></Ic>
          </TrayItem>
          <TrayItem $w={24}>
            <Ic w={16} h={16}><rect x="1" y="4" width="9" height="8" rx="2" stroke="#fff" /><path d="M10 7l5-2v6l-5-2M2 1h7M2 15h7" stroke="#fff" /></Ic>
          </TrayItem>
          <TrayItem $w={24}>
            <Ic w={16} h={12}><rect x="3.500" y="3.500" width="12" height="7" stroke="#fff" /><rect x="5" y="5" width="8" height="4" fill="#fff" /><path d="M0 4h4M1.500 0v4M3 0v4" stroke="#fff" /></Ic>
          </TrayItem>
          <TrayItem $w={24}>
            <Ic w={16} h={14}><path d="M.5 4.500h3l4-4v13l-4-4h-3z" stroke="#fff" /><path d="M10 4c1 2 1 4 0 6M12.500 2c2 3 2 7 0 10" stroke="#aaa" /></Ic>
          </TrayItem>
          <TrayItem $w={26}>
            <Ic w={15} h={14}><path d="M1 8a10 10 0 019-5M1 11a7 7 0 017-5M1 14a3 3 0 013-3" stroke="#fff" /><circle cx="12" cy="12" r="1.500" fill="#fff" /></Ic>
          </TrayItem>
          <TrayItem $w={28}>
            <Ic w={16} h={16}><path d="M11 1l4 3-7 9c-2 2-5 3-6 2s0-4 2-6zM7 3l5 5" stroke="#fff" /></Ic>
          </TrayItem>
          <TrayItem $w={40} $size={13}>ع</TrayItem>
          <Clock>9:07 PM<br />2/8/2026</Clock>
          <TrayItem $w={55}><NoteIcon /></TrayItem>
        </Tray>
      </Taskbar>

      <Watermark>
        <MarkArabic>مستقل</MarkArabic>
        <MarkLatin>mostaql.com</MarkLatin>
      </Watermark>
    </Page>
  );
}
